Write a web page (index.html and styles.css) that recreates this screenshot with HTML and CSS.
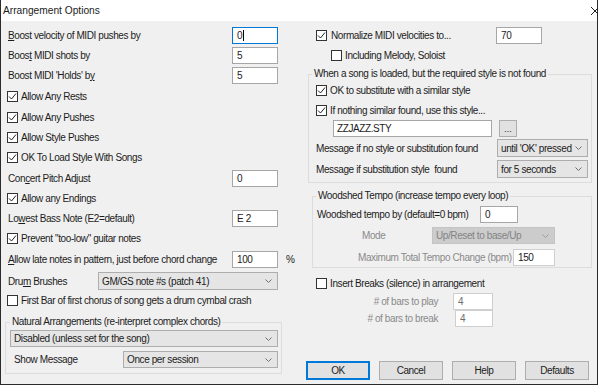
FILE: index.html
```html
<!DOCTYPE html>
<html>
<head lang="en">
    <meta charset="UTF-8">
    <title>Arrangement Options</title>
    <link rel="stylesheet" href="styles.css">
</head>
<body>
<div class="win">
    <div class="titlebar">
        <span class="title">Arrangement Options</span>
        <svg class="close" width="10" height="10" viewBox="0 0 10 10"><path d="M1 1L9 9M9 1L1 9" stroke="#222" stroke-width="1"/></svg>
    </div>
    <div class="content">
        <!-- left column -->
        <div class="left">
            <div class="row"><span class="txt"><u>B</u>oost velocity of MIDI pushes by</span><span class="field focus">0<i class="caret"></i></span></div>
            <div class="row"><span class="txt">Boos<u>t</u> MIDI shots by</span><span class="field">5</span></div>
            <div class="row"><span class="txt">Boost MIDI 'Holds' b<u>y</u></span><span class="field">5</span></div>
            <div class="row h22"><span class="cb on"></span>Allow Any Rests</div>
            <div class="row"><span class="cb on"></span>Allow Any Pushes</div>
            <div class="row"><span class="cb on"></span>Allow Style Pushes</div>
            <div class="row h21"><span class="cb on"></span>OK To Load Style With Songs</div>
            <div class="row"><span class="txt">Con<u>c</u>ert Pitch Adjust</span><span class="field">0</span></div>
            <div class="row"><span class="cb on"></span>Allow any Endings</div>
            <div class="row"><span class="txt">Lo<u>w</u>est Bass Note (E2=default)</span><span class="field">E 2</span></div>
            <div class="row"><span class="cb on"></span>Prevent "too-low" guitar notes</div>
            <div class="row h22"><span class="txt"><u>A</u>llow late notes in pattern, just before chord change</span><span class="field">100</span><span class="pct">%</span></div>
            <div class="row h22"><span class="txt">Dru<u>m</u> Brushes</span><span class="combo w-drum">GM/GS note #s (patch 41)<i class="chev"></i></span></div>
            <div class="row h16"><span class="cb"></span>First Bar of first chorus of song gets a drum cymbal crash</div>

            <fieldset class="grp g-nat">
                <legend>Natural Arrangements (re-interpret complex chords)</legend>
                <div class="combo w-full">Disabled (unless set for the song)<i class="chev"></i></div>
                <div class="row-s show-row"><span class="show-lbl">Show Message</span><span class="combo w-show">Once per session<i class="chev"></i></span></div>
            </fieldset>
        </div>

        <!-- right column -->
        <div class="right">
            <div class="row r-norm"><span class="cb on"></span>Normalize MIDI velocities to...<span class="field">70</span></div>
            <div class="row r-incl"><span class="cb"></span>Including Melody, Soloist</div>

            <fieldset class="grp g-style">
                <legend>When a song is loaded, but the required style is not found</legend>
                <div class="row in h21"><span class="cb on"></span>OK to substitute with a similar style</div>
                <div class="row in h19"><span class="cb on"></span>If nothing similar found, use this style...</div>
                <div class="row-s file-row"><span class="field w-file">ZZJAZZ.STY</span><span class="btn-dots">...</span></div>
                <div class="row-s msg-row m2"><span class="txt">Message if no style or substitution found</span><span class="combo w-msg">until 'OK' pressed<i class="chev"></i></span></div>
                <div class="row-s msg-row m3"><span class="txt">Message if substitution style&nbsp; found</span><span class="combo w-msg">for 5 seconds<i class="chev"></i></span></div>
            </fieldset>

            <fieldset class="grp g-wood">
                <legend>Woodshed Tempo (increase tempo every loop)</legend>
                <div class="row-s wood-row"><span class="wood-lbl">Woodshed tempo by (default=0 bpm)</span><span class="field w-wood">0</span></div>
                <div class="row-s mode-row"><span class="mode-lbl dim">Mode</span><span class="combo dis w-mode">Up/Reset to base/Up<i class="chev"></i></span></div>
                <div class="row-s max-row"><span class="max-lbl dim">Maximum Total Tempo Change (bpm)</span><span class="field pale w-max">150</span></div>
            </fieldset>

            <div class="row r-ins"><span class="cb"></span>Insert Breaks (silence) in arrangement</div>
            <div class="row-s bars-row"><span class="bars-lbl dim"># of bars to play</span><span class="field pale gray w-play">4</span></div>
            <div class="row-s bars-row"><span class="bars-lbl dim"># of bars to break</span><span class="field pale gray w-break">4</span></div>

            <div class="buttons">
                <span class="btn default">OK</span>
                <span class="btn">Cancel</span>
                <span class="btn">Help</span>
                <span class="btn">Defaults</span>
            </div>
        </div>
    </div>
</div>
</body>
</html>
```

FILE: styles.css
```css
*
{
    margin: 0;
    padding: 0;
    box-sizing: border-box;
}
body
{
    background: #fff;
    font-family: "Liberation Sans", Arial, sans-serif;
    font-size: 10px;
    letter-spacing: -0.4px;
    color: #1c1c1c;
}
.win
{
    width: 598px;
    height: 385px;
    background: #f0f0f0;
    border: 1px solid #2b2b2b;
    border-top: 0;
    display: flex;
    flex-direction: column;
}
.titlebar
{
    height: 21px;
    background: #fff;
    display: flex;
    align-items: center;
    justify-content: space-between;
    padding-left: 2px;
    flex: none;
}
.title
{
    font-size: 10.2px;
    letter-spacing: 0;
}
.close
{
    margin-right: -3px;
}
.content
{
    display: flex;
    padding: 4px 0 0 4px;
}
.left
{
    width: 277px;
    display: flex;
    flex-direction: column;
}
.right
{
    width: 286px;
    margin-left: 24px;
    display: flex;
    flex-direction: column;
}

/* rows */
.row
{
    display: flex;
    align-items: center;
    height: 20px;
    padding: 0 4px 0 2px;
    white-space: nowrap;
}
.row-s
{
    display: flex;
    align-items: center;
    height: 17px;
    white-space: nowrap;
}
.h22 { height: 22px; }
.h21 { height: 21px; }
.h19 { height: 19px; }
.h16 { height: 16px; }
.txt
{
    margin-left: 1px;
}
u
{
    text-decoration: underline;
    text-underline-offset: 1px;
}
.dim
{
    color: #8a8a8a;
}

/* text boxes */
.field
{
    margin-left: auto;
    width: 46px;
    height: 17px;
    flex: none;
    background: #fff;
    border: 1px solid #a6a6a6;
    padding-left: 4px;
    display: flex;
    align-items: center;
}
.focus
{
    border-color: #0078d7;
}
.caret
{
    width: 1px;
    height: 11px;
    background: #000;
    margin-left: 1px;
}
.pale
{
    border-color: #cfcfcf;
}
.gray
{
    color: #6d6d6d;
}
.pct
{
    width: 0;
    margin-left: 8px;
    margin-right: -8px;
    overflow: visible;
}

/* check boxes */
.cb
{
    width: 11px;
    height: 11px;
    flex: none;
    border: 1px solid #333;
    background: #fff;
    margin-right: 3px;
}
.cb.on
{
    background: #fff url("data:image/svg+xml,%3Csvg xmlns='http://www.w3.org/2000/svg' width='9' height='9' viewBox='0 0 9 9'%3E%3Cpath d='M1 4.5L3.5 7L8 1.5' fill='none' stroke='%23222' stroke-width='1'/%3E%3C/svg%3E") center no-repeat;
}

/* combo boxes */
.combo
{
    margin-left: auto;
    height: 17px;
    flex: none;
    background: #e5e5e5;
    border: 1px solid #adadad;
    padding: 0 5px 0 3px;
    display: flex;
    align-items: center;
    justify-content: space-between;
}
.chev
{
    width: 7px;
    height: 4px;
    background: url("data:image/svg+xml,%3Csvg xmlns='http://www.w3.org/2000/svg' width='7' height='4' viewBox='0 0 7 4'%3E%3Cpath d='M0.5 0.5L3.5 3.5L6.5 0.5' fill='none' stroke='%23707070' stroke-width='1'/%3E%3C/svg%3E") no-repeat;
}
.combo.dis
{
    background: #cccccc;
    border-color: #c4c4c4;
    color: #838383;
}
.combo.dis .chev
{
    opacity: 0.5;
}
.w-drum { width: 180px; height: 18px; }
.w-full { width: 268px; margin-top: 2px; }
.w-show { width: 155px; }
.w-msg { width: 91px; height: 18px; }
.w-mode { width: 123px; }

/* group boxes */
.grp
{
    border: 1px solid #dcdcdc;
    min-width: 0;
}
.grp legend
{
    padding: 0 2px;
    line-height: 12px;
}
.g-nat
{
    margin-top: 8px;
    width: 277px;
    padding: 0 3px 5px 4px;
}
.show-row
{
    margin-top: 4px;
}
.show-lbl
{
    width: 109px;
    margin-left: 4px;
}

.r-norm
{
    padding-left: 10px;
    padding-right: 50px;
}
.r-norm .cb
{
    margin-right: 4px;
}
.r-incl
{
    padding-left: 25px;
}
.g-style
{
    margin: 3px 0 0 2px;
    width: 284px;
    padding: 0 3px 4px 3px;
}
.row.in
{
    padding-left: 4px;
}
.file-row
{
    padding-left: 21px;
}
.w-file
{
    margin-left: 0;
    width: 159px;
    padding-left: 3px;
}
.btn-dots
{
    width: 18px;
    height: 17px;
    margin-left: 7px;
    background: #e1e1e1;
    border: 1px solid #adadad;
    display: flex;
    align-items: center;
    justify-content: center;
    font-size: 9px;
    letter-spacing: 0;
}
.msg-row
{
    height: 18px;
    padding-left: 3px;
}
.m2 { margin-top: 2px; }
.m3 { margin-top: 3px; }

.g-wood
{
    margin: 7px 0 0 6px;
    width: 280px;
    padding: 0 3px 1px 3px;
}
.wood-row
{
    margin-top: 4px;
}
.wood-lbl
{
    width: 164px;
    padding-left: 1px;
}
.w-wood
{
    margin-left: 0;
    width: 38px;
}
.mode-row
{
    margin-top: 4px;
    padding-left: 46px;
}
.mode-lbl
{
    width: 70px;
}
.w-mode
{
    margin-left: 0;
}
.max-row
{
    margin-top: 5px;
    padding-left: 42px;
}
.max-lbl
{
    width: 155px;
}
.w-max
{
    margin-left: 0;
    width: 42px;
}

.r-ins
{
    margin-top: 5px;
    padding-left: 10px;
}
.bars-lbl
{
    width: 132px;
    text-align: right;
}
.w-play
{
    margin-left: 15px;
    width: 40px;
}
.w-break
{
    margin-left: 17px;
    width: 38px;
}

/* buttons */
.buttons
{
    margin-top: 34px;
    display: flex;
    gap: 9px;
}
.btn
{
    width: 64px;
    height: 19px;
    background: #e1e1e1;
    border: 1px solid #adadad;
    display: flex;
    align-items: center;
    justify-content: center;
}
.btn.default
{
    border: 2px solid #0078d7;
}
```
